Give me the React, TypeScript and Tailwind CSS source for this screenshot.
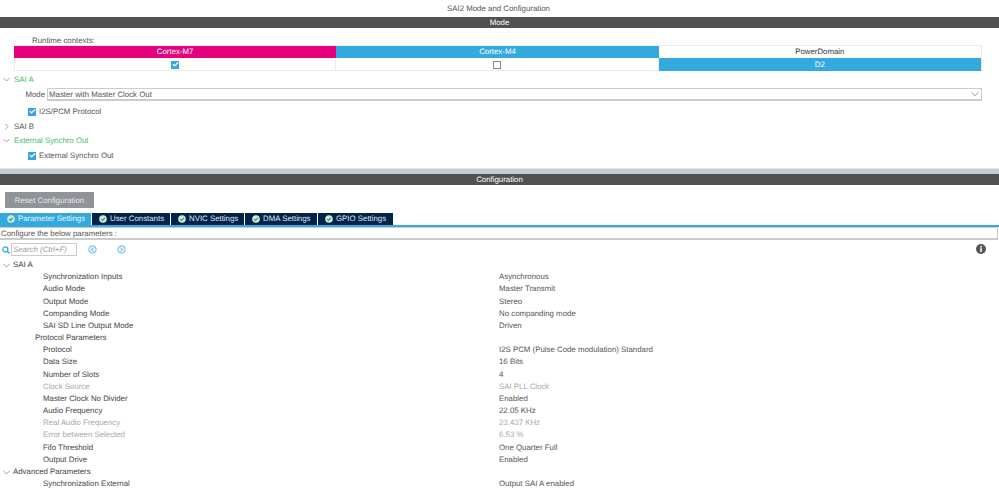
import { Check } from "lucide-react";

type Row = {
  label: string;
  value?: string;
  level: "section" | "group" | "param";
  muted?: boolean;
};

const rows: Row[] = [
  { label: "SAI A", level: "section" },
  { label: "Synchronization Inputs", value: "Asynchronous", level: "param" },
  { label: "Audio Mode", value: "Master Transmit", level: "param" },
  { label: "Output Mode", value: "Stereo", level: "param" },
  { label: "Companding Mode", value: "No companding mode", level: "param" },
  { label: "SAI SD Line Output Mode", value: "Driven", level: "param" },
  { label: "Protocol Parameters", level: "group" },
  { label: "Protocol", value: "I2S PCM (Pulse Code modulation) Standard", level: "param" },
  { label: "Data Size", value: "16 Bits", level: "param" },
  { label: "Number of Slots", value: "4", level: "param" },
  { label: "Clock Source", value: "SAI PLL Clock", level: "param", muted: true },
  { label: "Master Clock No Divider", value: "Enabled", level: "param" },
  { label: "Audio Frequency", value: "22.05 KHz", level: "param" },
  { label: "Real Audio Frequency", value: "23.437 KHz", level: "param", muted: true },
  { label: "Error between Selected", value: "6.53 %", level: "param", muted: true },
  { label: "Fifo Threshold", value: "One Quarter Full", level: "param" },
  { label: "Output Drive", value: "Enabled", level: "param" },
  { label: "Advanced Parameters", level: "section" },
  { label: "Synchronization External", value: "Output SAI A enabled", level: "param" },
];

const tabs = ["Parameter Settings", "User Constants", "NVIC Settings", "DMA Settings", "GPIO Settings"];
const tabWidths = ["w-[91px]", "w-[78px]", "w-[73px]", "w-[72px]", "w-[75px]"];

function Box({ checked }: { checked?: boolean }) {
  return checked ? (
    <span className="flex h-[8px] w-[8px] items-center justify-center bg-[#34a9dd]">
      <Check className="h-[7px] w-[7px] text-white" strokeWidth={4} />
    </span>
  ) : (
    <span className="h-[8px] w-[8px] border border-[#888] bg-white" />
  );
}

function Caret({ right, className }: { right?: boolean; className?: string }) {
  return (
    <svg viewBox="0 0 7 7" fill="none" stroke="#888" strokeWidth="0.8" className={`h-[7px] w-[7px] shrink-0 ${className ?? ""}`}>
      <path d={right ? "M2 0.5 5 3.5 2 6.5" : "M0.5 2 3.5 5 6.5 2"} />
    </svg>
  );
}

function Bar({ title }: { title: string }) {
  return <div className="flex h-[11px] items-center justify-center bg-[#505150] pt-px text-white">{title}</div>;
}

function TabIcon() {
  return (
    <svg viewBox="0 0 8 8" className="h-[8px] w-[8px] shrink-0">
      <circle cx="4" cy="4" r="3.8" fill="#cfe9d8" />
      <path d="M2.2 4.1 3.5 5.4 5.9 2.8" fill="none" stroke="#3a9a5c" strokeWidth="1.2" />
    </svg>
  );
}

function NavIcon({ right }: { right?: boolean }) {
  return (
    <svg viewBox="0 0 10 10" className="h-[9px] w-[9px]">
      <circle cx="5" cy="5" r="4.2" fill="#e4f3fa" stroke="#5db7e2" strokeWidth="1" />
      <path d={right ? "M4 3 6 5 4 7" : "M6 3 4 5 6 7"} fill="none" stroke="#34a9dd" strokeWidth="1" />
    </svg>
  );
}

function SearchIcon() {
  return (
    <svg viewBox="0 0 8 8" fill="none" stroke="#34a9dd" strokeWidth="1.3" className="ml-[2px] h-[8px] w-[8px] shrink-0">
      <circle cx="3.4" cy="3.4" r="2.5" />
      <path d="M5.2 5.2 7.6 7.6" />
    </svg>
  );
}

export default function App() {
  return (
    <div className="h-[500px] w-[999px] overflow-hidden bg-white font-['Liberation_Sans',Arial,sans-serif] text-[7.85px] text-[#555] [text-rendering:geometricPrecision]">
      <div className="flex h-[17px] items-center justify-center pr-[2px] pt-px">SAI2 Mode and Configuration</div>
      <Bar title="Mode" />

      <div className="h-[141px] border-b border-[#e4e6e8]">
        <div className="h-[17px] pl-[32px] pt-[8px] leading-[10px]">Runtime contexts:</div>

        <div className="ml-[14px] grid h-[26px] w-[968px] grid-cols-3 grid-rows-[12px_13px] border-b border-r border-t border-[#e9ebec] text-center leading-[12px]">
          <div className="bg-[#e5007e] text-white">Cortex-M7</div>
          <div className="bg-[#34a9dd] text-white">Cortex-M4</div>
          <div className="text-[#333]">PowerDomain</div>
          <div className="flex items-center justify-center border-l border-r border-[#e9ebec]">
            <Box checked />
          </div>
          <div className="flex items-center justify-center border-r border-[#e9ebec]">
            <Box />
          </div>
          <div className="bg-[#34a9dd] leading-[13px] text-white">D2</div>
        </div>

        <div className="flex h-[17px] items-center pl-[3px] text-[#45bd6e]">
          <Caret className="mr-[4px]" />
          SAI A
        </div>

        <div className="flex h-[13px] items-center">
          <span className="w-[47px] pr-[2px] pt-px text-right">Mode</span>
          <div className="flex h-[13px] w-[935px] items-center justify-between border border-b-2 border-[#c9cccd] pl-[1px] pr-[2px]">
            <span className="pt-[2px]">Master with Master Clock Out</span>
            <Caret className="h-[8px] w-[8px]" />
          </div>
        </div>

        <div className="flex h-[20px] items-center gap-[3px] pl-[28px] pt-px">
          <Box checked />
          I2S/PCM Protocol
        </div>

        <div className="flex h-[10px] items-center pl-[3px] pt-px">
          <Caret right className="mr-[4px]" />
          SAI B
        </div>

        <div className="flex h-[18px] items-center pl-[3px] pt-px text-[#45bd6e]">
          <Caret className="mr-[4px]" />
          External Synchro Out
        </div>

        <div className="flex h-[12px] items-center gap-[3px] pl-[28px] pt-px">
          <Box checked />
          External Synchro Out
        </div>
      </div>

      <div className="h-[5px] bg-[#c6cdd2]" />
      <Bar title="Configuration" />

      <div className="pl-[5px] pt-[7px]">
        <div className="flex h-[16px] w-[89px] items-center justify-center bg-[#8f9499] pt-px text-[#e4e6e8]">
          Reset Configuration
        </div>
      </div>

      <div className="mt-[5px] flex h-[12px] gap-px">
        {tabs.map((tab, i) => (
          <div
            key={tab}
            className={`flex items-center gap-[3px] pl-[7px] ${tabWidths[i]} ${
              i === 0 ? "bg-[#34a9dd] text-[#e6f5fb]" : "bg-[#03234b] text-[#dfe6ee]"
            }`}
          >
            <TabIcon />
            {tab}
          </div>
        ))}
      </div>
      <div className="h-[2px] bg-[#34a9dd]" />

      <div className="h-[13px] w-[998px] border border-b-2 border-l-0 border-[#c9cccd] pl-px leading-[11px]">
        Configure the below parameters :
      </div>

      <div className="relative flex h-[16px] items-center pt-[3px]">
        <SearchIcon />
        <div className="ml-px flex h-[13px] w-[66px] items-center border border-[#c9cccd] pl-px italic text-[#999]">
          Search (Ctrl+F)
        </div>
        <span className="ml-[11px] flex">
          <NavIcon />
        </span>
        <span className="ml-[20px] flex">
          <NavIcon right />
        </span>
        <svg viewBox="0 0 10 10" className="absolute right-[13px] top-[4px] h-[10px] w-[10px]">
          <circle cx="5" cy="5" r="5" fill="#555" />
          <rect x="4.2" y="4.2" width="1.6" height="3.8" fill="#fff" />
          <rect x="4.2" y="2" width="1.6" height="1.5" fill="#fff" />
        </svg>
      </div>

      <div className="pt-[3px]">
        {rows.map((row) => (
          <div key={row.label} className="flex h-[12.18px] items-center leading-[12px]">
            <div
              className={`flex w-[499px] items-center ${row.muted ? "text-[#a8a8a8]" : "text-[#444]"} ${
                row.level === "param" ? "pl-[43px]" : row.level === "group" ? "pl-[35px]" : "pl-[3px]"
              }`}
            >
              {row.level === "section" && <Caret className="mr-[3px]" />}
              {row.label}
            </div>
            {row.value && <div className={row.muted ? "text-[#a8a8a8]" : "text-[#555]"}>{row.value}</div>}
          </div>
        ))}
      </div>
    </div>
  );
}
